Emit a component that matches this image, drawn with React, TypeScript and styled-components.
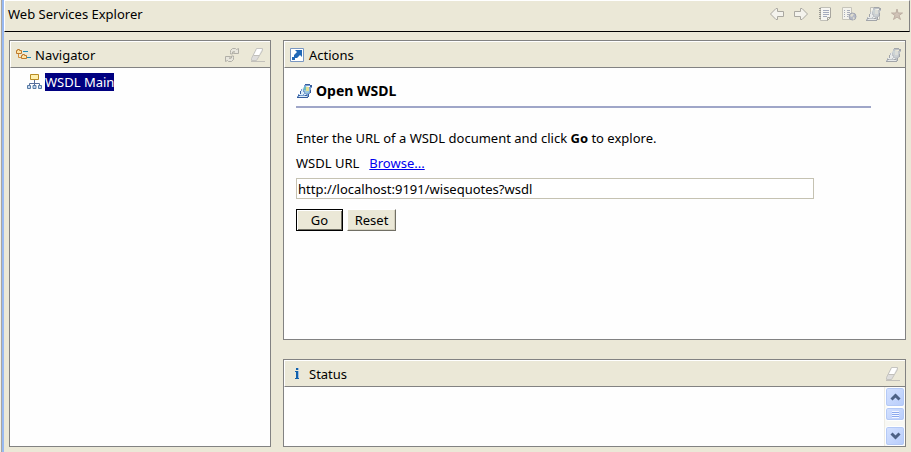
import React from "react";
import styled, { createGlobalStyle } from "styled-components";

const beige = "#ebe8d7";
const line = "#828282";

const GlobalStyle = createGlobalStyle`
  * { box-sizing: border-box; }
  html, body, #root { height: 100%; }
  body {
    margin: 0;
    background: ${beige};
    color: #000;
    font-family: "Noto Sans", "Open Sans", sans-serif;
    font-size: 13px;
    line-height: 18px;
  }
  svg { display: block; flex: none; }
`;

const Page = styled.div`
  display: flex;
  height: 100%;
  min-height: 360px;
`;

const Edge = styled.div`
  flex: none;
  width: 4px;
  border-left: 1px solid #f2f0e6;
  background: linear-gradient(to right, #a6a5a0 1px, #98b9f2 1px);
`;

const Main = styled.div`
  flex: 1;
  min-width: 0;
  display: flex;
  flex-direction: column;
`;

const TopBar = styled.header`
  display: flex;
  align-items: center;
  justify-content: space-between;
  height: 32px;
  margin-right: 1px;
  padding: 0 4px 4px 3px;
  border-top: 1px solid #fff;
  border-left: 1px solid #fff;
  border-right: 1px solid ${line};
  border-bottom: 1px solid #000;
`;

const PageTitle = styled.h1`
  margin: 0;
  font-size: 13px;
  font-weight: 400;
  white-space: nowrap;
`;

const Tools = styled.div<{ $gap: number }>`
  display: flex;
  align-items: center;
  gap: ${(p) => p.$gap}px;
`;

const ToolButton = styled.button`
  display: block;
  width: 16px;
  height: 16px;
  padding: 0;
  border: 0;
  background: none;
`;

const Frames = styled.main`
  flex: 1;
  min-height: 0;
  display: grid;
  grid-template-columns: 262fr 623fr;
  gap: 12px;
  padding: 8px 5px 5px;
`;

const Column = styled.div`
  display: flex;
  flex-direction: column;
  gap: 19px;
  min-width: 0;
  min-height: 0;
`;

const Panel = styled.section<{ $height?: number }>`
  display: flex;
  flex-direction: column;
  flex: ${(p) => (p.$height ? `0 0 ${p.$height}px` : "1")};
  min-height: 0;
  border: 1px solid ${line};
  background: #fefefe;
`;

const PanelHeader = styled.header`
  flex: none;
  display: flex;
  align-items: center;
  justify-content: space-between;
  height: 27px;
  padding: 1px 4px 0;
  border-top: 1px solid #fff;
  border-left: 1px solid #fff;
  border-bottom: 1px solid ${line};
  background: ${beige};
`;

const PanelTitle = styled.h2`
  display: flex;
  align-items: center;
  gap: 4px;
  margin: 0;
  font-size: 13px;
  font-weight: 400;
`;

const Tree = styled.ul`
  margin: 0;
  padding: 5px 17px;
  list-style: none;
`;

const TreeItem = styled.li`
  display: flex;
  align-items: center;
  gap: 2px;
`;

const TreeLink = styled.a`
  height: 18px;
  line-height: 18px;
  background: #000080;
  color: #fff;
  text-decoration: none;
`;

const Content = styled.div`
  padding: 14px 34px 12px 12px;
`;

const FormTitle = styled.h3`
  display: flex;
  align-items: center;
  gap: 4px;
  margin: 0 0 21px;
  padding-bottom: 6px;
  border-bottom: 2px solid #9fa6c8;
  font-size: 14px;
  font-weight: 700;
`;

const Text = styled.p`
  margin: 0 0 7px;
`;

const FieldRow = styled.div`
  display: flex;
  gap: 10px;
  margin-bottom: 6px;
`;

const Link = styled.a`
  color: #0000f0;
  text-decoration: underline;
`;

const UrlInput = styled.input`
  display: block;
  width: 90%;
  height: 21px;
  padding: 0 1px;
  border: 1px solid #c5c2b2;
  border-radius: 0;
  background: #fff;
  color: #000;
  font: inherit;
  outline: 0;
`;

const Buttons = styled.div`
  display: flex;
  gap: 4px;
  margin-top: 10px;
`;

const PushButton = styled.button<{ $primary?: boolean }>`
  width: ${(p) => (p.$primary ? 47 : 49)}px;
  height: 22px;
  padding: 0;
  border: 1px solid;
  border-color: ${(p) => (p.$primary ? "#000" : "#fff #716f64 #716f64 #fff")};
  box-shadow: ${(p) =>
    p.$primary ? "inset 1px 1px #fff, inset -1px -1px #716f64" : "inset -1px -1px #d4d0be"};
  background: ${beige};
  color: #000;
  font: inherit;
`;

const StatusBody = styled.div`
  flex: 1;
  min-height: 0;
  display: flex;
  justify-content: flex-end;
`;

const ScrollBar = styled.div`
  display: flex;
  flex-direction: column;
  justify-content: space-between;
  width: 21px;
  border-left: 1px solid #eeece4;
  background: #f8f8f4;
`;

const ScrollButton = styled.button`
  display: grid;
  place-items: center;
  width: 20px;
  height: 20px;
  padding: 0;
  border: 1px solid #fff;
  border-radius: 3px;
  box-shadow: inset 0 0 0 1px #b4c9f6, inset 0 -1px #9fb9e8;
  background: linear-gradient(135deg, #d5e2ff, #b7ccfb);
`;

const ScrollThumb = styled(ScrollButton)`
  height: 14px;
`;

function Arrow({ right }: { right?: boolean }) {
  return (
    <svg width="16" height="16" viewBox="0 0 16 16" aria-hidden="true">
      <path
        transform={right ? "matrix(-1 0 0 1 16 0)" : undefined}
        d="M1.5 8 7 2.5h1.5v3h6v5h-6v3H7Z"
        fill="#f4f3ed"
        stroke="#aaa8a1"
      />
    </svg>
  );
}

function Notebook({ globe }: { globe?: boolean }) {
  return (
    <svg width="16" height="16" viewBox="0 0 16 16" aria-hidden="true">
      {globe ? (
        <>
          <path d="M1.500 1.500h9v12h-9z" fill="#f4f3ed" stroke="#c6c4ba" />
          <path d="M3 4.500h1m2 0h3M3 6.500h1m2 0h3M3 8.500h1m2 0h2M3 10.500h1m2 0h1" stroke="#a9adba" />
          <circle cx="11.5" cy="10.500" r="3.500" fill="#b6bac6" stroke="#a0a4b0" />
          <path d="M9 10q1-3 4-2l-2 3ZM12 11l2 1-2 2Z" fill="#dfddcf" />
        </>
      ) : (
        <>
          <path d="M3.500 1.500h10v10l-3 3h-7z" fill="#f7f6f2" stroke="#c0bfb7" />
          <path d="M13.500 2v9.500l-3 3v-3h3" fill="none" stroke="#a8a69f" />
          <path d="M2 2.500h2M2 4.500h2M2 6.500h2M2 8.500h2M2 10.500h2M2 12.500h2" stroke="#9a9993" />
          <path d="M6 4.500h6M6 6.500h6M6 8.500h6M6 10.500h4" stroke="#a4aabd" />
        </>
      )}
    </svg>
  );
}

function Star() {
  return (
    <svg width="16" height="16" viewBox="0 0 16 16" aria-hidden="true">
      <path
        d="m8 3 1 4h4.500L10 9.500l1.500 4L8 11l-3.500 2.500 1.500-4L2.500 7H7Z"
        fill="#d0c3b7"
        stroke="#bcaea2"
      />
    </svg>
  );
}

function WsdlGlyph({ tone, page }: { tone: "blue" | "gray"; page?: boolean }) {
  const blue = tone === "blue";
  const dark = blue ? "#365c9c" : "#a2a5a9";
  const mid = blue ? "#789fd2" : "#bec2c7";
  const pale = blue ? "#dcecf8" : "#e8eaea";
  return (
    <svg width="16" height="16" viewBox="0 0 16 16" aria-hidden="true">
      {page && <path d="M5.500 1.500h9v12h-9z" fill="#f2f1e9" stroke="#c0bfb7" />}
      <path d="M9 1h5v1h2v3h-1v4h-1v2h-1v3h-3V4h4V3h-4v1H8V2h1Z" fill={mid} />
      <path d="M9 1h5v1H9zM14 2h2v2h-2zM14 7h1v3h-1zM12 11h1v3h-1z" fill={dark} />
      <circle cx="10" cy="7" r="3.500" fill={blue ? "#9bc8db" : "#cbd0d3"} />
      <path d="M10 4h3v4h-3z" fill={blue ? "#e3df92" : "#dcddd8"} />
      <path d="M8 4h2v3H8z" fill={blue ? "#65bac1" : "#cbd3d5"} />
      <path d="M5 6h3v2h1v2h1v2h2v3H1v-2h1v-2h2V8h1Z" fill={mid} />
      <path d="M6 6h1v3h1v2H5V8h1ZM4 11h3v1H3v-1ZM8 11h2v1H8z" fill={pale} />
      <path d="M1 14h11v1H1zM2 12h2v1H2zM9 12h2v1H9zM4 8h1v3H4z" fill={dark} />
      <path d="M3 13h8v1H3z" fill={pale} />
    </svg>
  );
}

function Refresh() {
  return (
    <svg width="16" height="16" viewBox="0 0 16 16" aria-hidden="true">
      <path
        d="M6.500 5.500V3.500l2-2h3l1 1 2-1v5h-5l1-2-2 .5v2h-2ZM9.500 10.500v2l-2 2h-3l-1-1-2 1v-5h5l-1 2 2-.5v-2h2Z"
        fill="#e8e6dd"
        stroke="#b1afa7"
      />
    </svg>
  );
}

function Eraser() {
  return (
    <svg width="16" height="16" viewBox="0 0 16 16" aria-hidden="true">
      <path d="m6.500 1.500-5 10v2h5l6-10v-2Z" fill="#dedddc" stroke="#c5c4c0" />
      <path d="M7 2h5L9 8H4Z" fill="#fff" />
      <path d="M3.500 8.500H9M1 14.500h14" fill="none" stroke="#c2c0ba" />
    </svg>
  );
}

function NavigatorIcon() {
  return (
    <svg width="16" height="16" viewBox="0 0 16 16" aria-hidden="true">
      <path d="M3.500 6v4.500H6" fill="none" stroke="#d18e3a" />
      <path d="M8 4.500h5M12 10.500h4" stroke="#218cb8" />
      <path d="M1.500 3.500h1v-1h2v1h2v3h-5zM6.500 8.500h1v-1h2v1h2v3h-5z" fill="#ffe5a6" stroke="#be792c" />
    </svg>
  );
}

function TreeIcon() {
  return (
    <svg width="16" height="16" viewBox="0 0 16 16" aria-hidden="true">
      <path d="M7.500 6v6M2.500 12V9.500h10V12" fill="none" stroke="#576e9b" />
      <path d="M3.500.5h8v5h-8z" fill="#fff0ad" stroke="#b88a22" />
      <path
        d="M.5 11.500h3v3h-3zM6 11.500h3v3H6zM11.500 11.500h3v3h-3z"
        fill="#c5d7ed"
        stroke="#577ba5"
      />
    </svg>
  );
}

function ActionsIcon() {
  return (
    <svg width="16" height="16" viewBox="0 0 16 16" aria-hidden="true">
      <path d="M1.500 1.500h13v13h-13z" fill="#fff" stroke="#7896c1" />
      <path d="M6 3h7v7l-2-2-3 3H6v2H3v-3h2V8l3-3Z" fill="#2168b7" />
    </svg>
  );
}

function InfoIcon() {
  return (
    <svg width="16" height="16" viewBox="0 0 16 16" aria-hidden="true">
      <path d="M9 2h1v2H9zM9 5h1v8H9z" fill="#a3bfdf" />
      <path d="M7 2h2v2H7zM6 5h3v7h1v1H6v-1h1V6H6z" fill="#1261ac" />
    </svg>
  );
}

function Chevron({ down }: { down?: boolean }) {
  return (
    <svg width="11" height="8" viewBox="0 0 11 8" aria-hidden="true">
      <path
        d={down ? "m1.500 1.500 4 4 4-4" : "m1.500 6.500 4-4 4 4"}
        fill="none"
        stroke="#4d6185"
        strokeWidth="3"
      />
    </svg>
  );
}

export default function App() {
  return (
    <>
      <GlobalStyle />
      <Page>
        <Edge />
        <Main>
          <TopBar>
            <PageTitle>Web Services Explorer</PageTitle>
            <Tools $gap={8}>
              <ToolButton aria-label="Back"><Arrow /></ToolButton>
              <ToolButton aria-label="Forward"><Arrow right /></ToolButton>
              <ToolButton aria-label="UDDI page"><Notebook /></ToolButton>
              <ToolButton aria-label="WSIL page"><Notebook globe /></ToolButton>
              <ToolButton aria-label="WSDL page"><WsdlGlyph tone="gray" page /></ToolButton>
              <ToolButton aria-label="Favorites"><Star /></ToolButton>
            </Tools>
          </TopBar>
          <Frames>
            <Column>
              <Panel>
                <PanelHeader>
                  <PanelTitle><NavigatorIcon />Navigator</PanelTitle>
                  <Tools $gap={10}>
                    <ToolButton aria-label="Refresh"><Refresh /></ToolButton>
                    <ToolButton aria-label="Clear"><Eraser /></ToolButton>
                  </Tools>
                </PanelHeader>
                <Tree>
                  <TreeItem><TreeIcon /><TreeLink href="#wsdl">WSDL Main</TreeLink></TreeItem>
                </Tree>
              </Panel>
            </Column>
            <Column>
              <Panel>
                <PanelHeader>
                  <PanelTitle><ActionsIcon />Actions</PanelTitle>
                  <ToolButton aria-label="Open WSDL"><WsdlGlyph tone="gray" /></ToolButton>
                </PanelHeader>
                <Content>
                  <FormTitle><WsdlGlyph tone="blue" />Open WSDL</FormTitle>
                  <Text>Enter the URL of a WSDL document and click <b>Go</b> to explore.</Text>
                  <FieldRow>
                    <label htmlFor="wsdl-url">WSDL URL</label>
                    <Link href="#browse">Browse...</Link>
                  </FieldRow>
                  <UrlInput id="wsdl-url" type="text" defaultValue="http://localhost:9191/wisequotes?wsdl" />
                  <Buttons>
                    <PushButton $primary>Go</PushButton>
                    <PushButton>Reset</PushButton>
                  </Buttons>
                </Content>
              </Panel>
              <Panel $height={88}>
                <PanelHeader>
                  <PanelTitle><InfoIcon />Status</PanelTitle>
                  <ToolButton aria-label="Clear status"><Eraser /></ToolButton>
                </PanelHeader>
                <StatusBody>
                  <ScrollBar>
                    <div>
                      <ScrollButton aria-label="Scroll up"><Chevron /></ScrollButton>
                      <ScrollThumb aria-label="Scroll position">
                        <svg width="7" height="7" viewBox="0 0 7 7" aria-hidden="true">
                          <path d="M0 .5h7M0 2.500h7M0 4.500h7M0 6.500h7" stroke="#f5f8ff" />
                          <path d="M0 1.500h7M0 3.500h7M0 5.500h7" stroke="#8ba9ee" />
                        </svg>
                      </ScrollThumb>
                    </div>
                    <ScrollButton aria-label="Scroll down"><Chevron down /></ScrollButton>
                  </ScrollBar>
                </StatusBody>
              </Panel>
            </Column>
          </Frames>
        </Main>
      </Page>
    </>
  );
}
